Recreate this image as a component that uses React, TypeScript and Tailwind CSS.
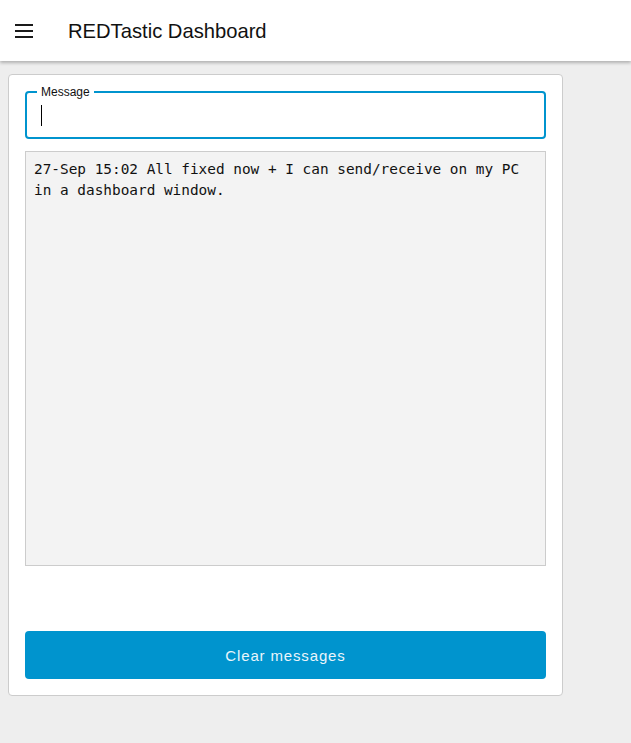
import React from 'react';

export default function App() {
  return (
    <div className="min-h-[743px] w-[631px] bg-[#eeeeee] font-['Liberation_Sans',Arial,sans-serif]">
      {/* Toolbar */}
      <header className="h-[61px] bg-white flex items-center shadow-[0_2px_3px_rgba(0,0,0,0.25)] relative z-10">
        <button className="ml-[15px] w-[18px] flex flex-col gap-[4px]">
          <span className="h-[2px] w-full bg-[#1a1a1a]" />
          <span className="h-[2px] w-full bg-[#1a1a1a]" />
          <span className="h-[2px] w-full bg-[#1a1a1a]" />
        </button>
        <h1 className="ml-[35px] mt-[2px] text-[20.2px] text-[#111] leading-none">REDTastic Dashboard</h1>
      </header>

      <main className="pt-[13px] pl-[8px]">
        <div className="w-[555px] h-[622px] bg-white border border-[#cccccc] rounded-[4px] px-[16px] pt-[16px] flex flex-col">
          {/* Text input */}
          <div className="relative h-[48px] border-2 border-[#0094ce] rounded-[4px]">
            <span className="absolute -top-[8px] left-[10px] px-[4px] bg-white text-[12px] leading-[14px] text-[#111]">
              Message
            </span>
            <span className="absolute left-[14px] top-[12px] w-px h-[21px] bg-black" />
          </div>

          {/* Messages */}
          <div className="mt-[12px] h-[415px] bg-[#f3f3f3] border border-[#cccccc] px-[8px] py-[7px] font-['DejaVu_Sans_Mono',monospace] text-[14.4px] leading-[20.5px] text-[#111]">
            27-Sep 15:02 All fixed now + I can send/receive on my PC in a dashboard window.
          </div>

          <div className="flex-1" />

          {/* Button */}
          <button className="mb-[16px] h-[48px] w-full rounded-[4px] bg-[#0094ce] pt-[2px] text-[15px] tracking-[0.85px] text-[#eaf5fb]">
            Clear messages
          </button>
        </div>
      </main>
    </div>
  );
}
